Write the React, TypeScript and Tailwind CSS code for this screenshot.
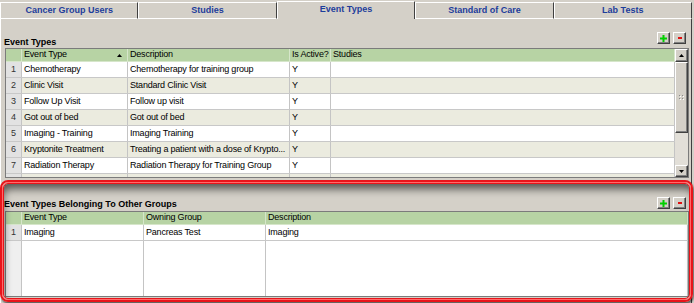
import React from 'react';

const tabs = ['Cancer Group Users', 'Studies', 'Event Types', 'Standard of Care', 'Lab Tests'];

const eventTypes = [
  ['Chemotherapy', 'Chemotherapy for training group', 'Y', ''],
  ['Clinic Visit', 'Standard Clinic Visit', 'Y', ''],
  ['Follow Up Visit', 'Follow up visit', 'Y', ''],
  ['Got out of bed', 'Got out of bed', 'Y', ''],
  ['Imaging - Training', 'Imaging Training', 'Y', ''],
  ['Kryptonite Treatment', 'Treating a patient with a dose of Krypto...', 'Y', ''],
  ['Radiation Therapy', 'Radiation Therapy for Training Group', 'Y', ''],
];

const otherGroups = [['Imaging', 'Pancreas Test', 'Imaging']];

const cols1 = ['w-[106px]', 'w-[162px]', 'w-[41px]', 'flex-1'];
const cols2 = ['w-[122px]', 'w-[122px]', 'flex-1'];

const AddRemove: React.FC = () => (
  <div className="flex gap-[3px]">
    <button className="w-[13px] h-[12px] bg-[#d4d0c8] border border-t-white border-l-white border-b-[#404040] border-r-[#404040] shadow-[inset_-1px_-1px_0_#808080] flex items-center justify-center">
      <svg width="7" height="7" viewBox="0 0 7 7">
        <rect x="0" y="2.5" width="7" height="2" fill="#00d000" />
        <rect x="2.5" y="0" width="2" height="7" fill="#00d000" />
      </svg>
    </button>
    <button className="w-[13px] h-[12px] bg-[#d4d0c8] border border-t-white border-l-white border-b-[#404040] border-r-[#404040] shadow-[inset_-1px_-1px_0_#808080] flex items-center justify-center">
      <svg width="4" height="2" viewBox="0 0 4 2">
        <rect x="0" y="0" width="4" height="2" fill="#e01010" />
      </svg>
    </button>
  </div>
);

const Arrow: React.FC<{ down?: boolean }> = ({ down }) => (
  <svg width="5" height="3" viewBox="0 0 5 3">
    <polygon points={down ? '0,0 5,0 2.5,3' : '0,3 5,3 2.5,0'} fill="#000" />
  </svg>
);

const HeaderRow: React.FC<{ cols: string[]; labels: string[]; sortFirst?: boolean }> = ({ cols, labels, sortFirst }) => (
  <div className="flex h-[13px] shrink-0 bg-[#b7d3a4] border-b border-[#d6e6ca]">
    <div className="w-[16px] shrink-0 border-r border-[#d6e6ca]" />
    {labels.map((l, i) => (
      <div key={l} className={`${cols[i]} shrink-0 min-w-0 flex items-center justify-between px-[2px] border-r border-[#d6e6ca] whitespace-nowrap overflow-hidden`}>
        <span>{l}</span>
        {sortFirst && i === 0 && (
          <span className="mr-[3px]">
            <Arrow />
          </span>
        )}
      </div>
    ))}
  </div>
);

const BodyRow: React.FC<{ cols: string[]; cells: string[]; n?: number; alt: boolean }> = ({ cols, cells, n, alt }) => (
  <div className={`flex h-[16px] shrink-0 border-b border-[#c8c8c8] ${alt ? 'bg-[#ebebdf]' : 'bg-white'}`}>
    <div className="w-[16px] shrink-0 bg-[#e2e2e2] border-r border-[#c4c4c4] flex items-center justify-center text-[#333]">{n}</div>
    {cells.map((c, i) => (
      <div key={i} className={`${cols[i]} shrink-0 min-w-0 flex items-center px-[2px] border-r border-[#c4c4c4] whitespace-nowrap overflow-hidden`}>
        {c}
      </div>
    ))}
  </div>
);

const App: React.FC = () => {
  return (
    <div className="relative w-[694px] h-[303px] overflow-hidden bg-[#d4d0c8] font-['Liberation_Sans',Arial,sans-serif] text-[9px] tracking-[-0.2px] text-black">
      {/* Tabs */}
      <div className="grid grid-cols-5 w-[692px] h-[19px] items-end">
        {tabs.map(t =>
          t === 'Event Types' ? (
            <div key={t} className="h-[18px] border-t border-l border-r border-t-white border-l-white border-r-[#404040] flex items-center justify-center font-bold tracking-normal text-[#1d3d9b] pb-[1px]">
              {t}
            </div>
          ) : (
            <div key={t} className="h-[17px] border-t border-l border-r border-b border-t-white border-l-white border-r-[#404040] border-b-white flex items-center justify-center font-bold tracking-normal text-[#1d3d9b]">
              {t}
            </div>
          )
        )}
      </div>

      {/* Panel */}
      <div className="w-[692px] h-[284px] border-l border-r border-l-white border-r-[#404040] flex flex-col">
        <div className="h-[29px] flex items-end justify-between shrink-0">
          <span className="ml-[3px] font-bold tracking-normal leading-[11px]">Event Types</span>
          <div className="mb-[4px] mr-[5px]">
            <AddRemove />
          </div>
        </div>

        {/* Event types table */}
        <div className="ml-[4px] w-[684px] h-[130px] shrink-0 border border-[#7b7b7b] flex bg-white">
          <div className="flex-1 min-w-0 flex flex-col overflow-hidden">
            <HeaderRow cols={cols1} labels={['Event Type', 'Description', 'Is Active?', 'Studies']} sortFirst />
            {eventTypes.map((r, i) => (
              <BodyRow key={i} cols={cols1} cells={r} n={i + 1} alt={i % 2 === 1} />
            ))}
            <BodyRow cols={cols1} cells={['', '', '', '']} alt />
          </div>
          <div className="w-[13px] shrink-0 flex flex-col bg-[#e2dfd8]">
            <div className="h-[13px] bg-[#d4d0c8] border border-t-white border-l-white border-b-[#404040] border-r-[#404040] shadow-[inset_-1px_-1px_0_#808080] flex items-center justify-center">
              <Arrow />
            </div>
            <div className="h-[71px] bg-[#d4d0c8] border border-t-white border-l-white border-b-[#404040] border-r-[#404040] shadow-[inset_-1px_-1px_0_#808080] flex items-center justify-center">
              <svg width="5" height="5" viewBox="0 0 5 5">
                <rect x="0" y="0" width="1" height="1" fill="#8a8a8a" />
                <rect x="3" y="0" width="1" height="1" fill="#8a8a8a" />
                <rect x="1" y="1" width="1" height="1" fill="#fff" />
                <rect x="4" y="1" width="1" height="1" fill="#fff" />
                <rect x="0" y="3" width="1" height="1" fill="#8a8a8a" />
                <rect x="3" y="3" width="1" height="1" fill="#8a8a8a" />
                <rect x="1" y="4" width="1" height="1" fill="#fff" />
                <rect x="4" y="4" width="1" height="1" fill="#fff" />
              </svg>
            </div>
            <div className="flex-1" />
            <div className="h-[12px] bg-[#d4d0c8] border border-t-white border-l-white border-b-[#404040] border-r-[#404040] shadow-[inset_-1px_-1px_0_#808080] flex items-center justify-center">
              <Arrow down />
            </div>
          </div>
        </div>

        <div className="h-[33px] flex items-end justify-between shrink-0">
          <span className="ml-[3px] font-bold tracking-normal leading-[11px] mb-[1px]">Event Types Belonging To Other Groups</span>
          <div className="mb-[2px] mr-[5px]">
            <AddRemove />
          </div>
        </div>

        {/* Other groups table */}
        <div className="ml-[4px] w-[684px] h-[86px] shrink-0 border border-[#7b7b7b] flex flex-col bg-white overflow-hidden">
          <HeaderRow cols={cols2} labels={['Event Type', 'Owning Group', 'Description']} />
          {otherGroups.map((r, i) => (
            <BodyRow key={i} cols={cols2} cells={r} n={i + 1} alt={false} />
          ))}
          <div className="flex-1 flex">
            <div className="w-[16px] shrink-0 bg-[#efefef] border-r border-[#c4c4c4]" />
            {cols2.map((c, i) => (
              <div key={i} className={`${c} shrink-0 border-r border-[#c4c4c4]`} />
            ))}
          </div>
        </div>
      </div>

      {/* Red highlight overlay */}
      <div className="absolute left-0 top-[180px] w-[693px] h-[122px] pointer-events-none rounded-[8px] border-2 border-[#e8141a] shadow-[1px_2px_2px_rgba(0,0,0,0.55)]">
        <div className="h-full rounded-[6px] border border-[#ff6a6a]">
          <div className="h-full rounded-[5px] border border-[#e8141a] shadow-[inset_2px_8px_8px_-3px_rgba(0,0,0,0.6)]" />
        </div>
      </div>
    </div>
  );
};

export default App;
